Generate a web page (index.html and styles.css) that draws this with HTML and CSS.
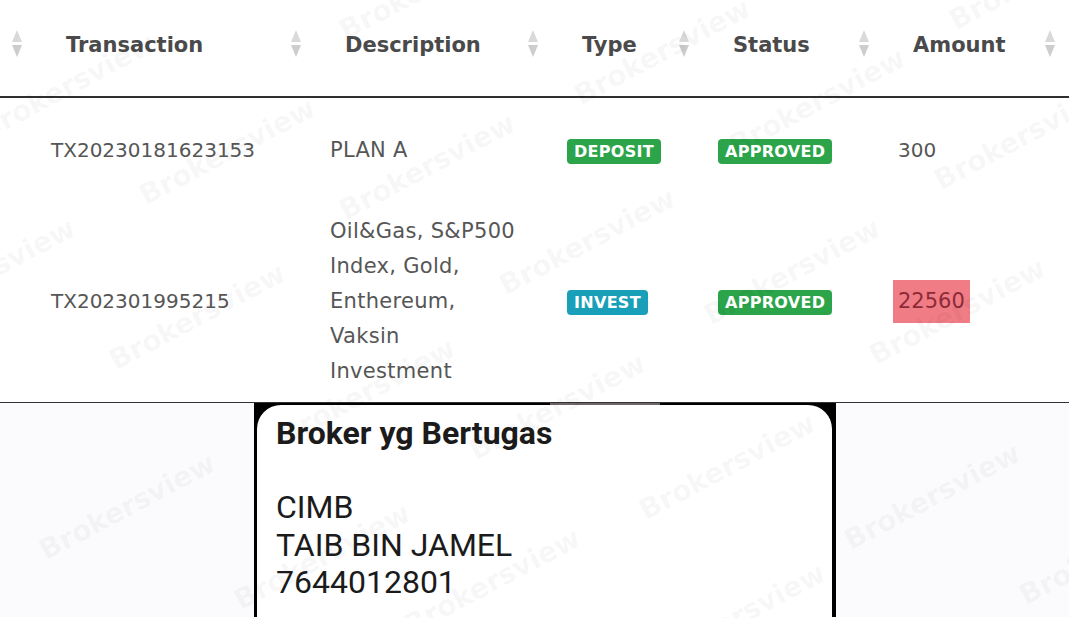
FILE: index.html
```html
<!DOCTYPE html>
<html>
<head>
<meta charset="utf-8">
<link rel="stylesheet" href="styles.css">
</head>
<body>
<div class="page">
  <table class="tx">
    <colgroup>
      <col class="c0"><col class="c1"><col class="c2"><col class="c3"><col class="c4"><col class="c5">
    </colgroup>
    <thead>
      <tr>
        <th><span class="sort"></span></th>
        <th>Transaction<span class="sort"></span></th>
        <th>Description<span class="sort"></span></th>
        <th>Type<span class="sort"></span></th>
        <th>Status<span class="sort"></span></th>
        <th>Amount<span class="sort"></span></th>
      </tr>
    </thead>
    <tbody>
      <tr class="r1">
        <td></td>
        <td>TX20230181623153</td>
        <td class="desc">PLAN A</td>
        <td><span class="badge green">DEPOSIT</span></td>
        <td><span class="badge green">APPROVED</span></td>
        <td>300</td>
      </tr>
      <tr class="r2">
        <td></td>
        <td>TX202301995215</td>
        <td class="desc">Oil&amp;Gas, S&amp;P500 Index, Gold, Enthereum, Vaksin Investment</td>
        <td><span class="badge teal">INVEST</span></td>
        <td><span class="badge green">APPROVED</span></td>
        <td><span class="hl">22560</span></td>
      </tr>
    </tbody>
  </table>

  <div class="shot">
    <div class="side left"></div>
    <div class="phone">
      <div class="phone-top"><span class="grey"></span></div>
      <div class="card">
        <div class="title">Broker yg Bertugas</div>
        <div class="lines">
          <div>&nbsp;</div>
          <div>CIMB</div>
          <div>TAIB BIN JAMEL</div>
          <div>7644012801</div>
        </div>
      </div>
    </div>
    <div class="side"></div>
  </div>

  <div class="wm" style="left:-30px;top:70px">Brokersview</div>
  <div class="wm" style="left:130px;top:135px">Brokersview</div>
  <div class="wm" style="left:330px;top:150px">Brokersview</div>
  <div class="wm" style="left:565px;top:35px">Brokersview</div>
  <div class="wm" style="left:720px;top:85px">Brokersview</div>
  <div class="wm" style="left:925px;top:120px">Brokersview</div>
  <div class="wm" style="left:330px;top:-30px">Brokersview</div>
  <div class="wm" style="left:940px;top:-40px">Brokersview</div>
  <div class="wm" style="left:490px;top:225px">Brokersview</div>
  <div class="wm" style="left:695px;top:255px">Brokersview</div>
  <div class="wm" style="left:100px;top:300px">Brokersview</div>
  <div class="wm" style="left:860px;top:295px">Brokersview</div>
  <div class="wm" style="left:-110px;top:255px">Brokersview</div>
  <div class="wm" style="left:270px;top:375px">Brokersview</div>
  <div class="wm" style="left:460px;top:390px">Brokersview</div>
  <div class="wm" style="left:30px;top:490px">Brokersview</div>
  <div class="wm" style="left:225px;top:540px">Brokersview</div>
  <div class="wm" style="left:395px;top:565px">Brokersview</div>
  <div class="wm" style="left:630px;top:450px">Brokersview</div>
  <div class="wm" style="left:835px;top:480px">Brokersview</div>
  <div class="wm" style="left:640px;top:600px">Brokersview</div>
  <div class="wm" style="left:1010px;top:535px">Brokersview</div>
</div>
</body>
</html>
```

FILE: styles.css
```css
* { box-sizing: border-box; }
html, body { margin: 0; padding: 0; background: #ffffff; }
body { width: 1069px; height: 618px; overflow: hidden; }

.page {
  position: relative;
  width: 1069px;
  height: 618px;
  overflow: hidden;
  font-family: "DejaVu Sans", "Open Sans", sans-serif;
}

.tx {
  width: 1069px;
  border-collapse: collapse;
  table-layout: fixed;
}
.c0 { width: 36px; }
.c1 { width: 279px; }
.c2 { width: 237px; }
.c3 { width: 151px; }
.c4 { width: 180px; }
.c5 { width: 186px; }

.tx th {
  position: relative;
  height: 97px;
  padding: 0 0 6px 30px;
  text-align: left;
  font-size: 21px;
  font-weight: bold;
  color: #4a4a4a;
  border-bottom: 2px solid #2f2f2f;
  white-space: nowrap;
}

.sort {
  position: absolute;
  right: 14px;
  top: 30px;
  width: 10px;
  height: 27px;
}
.sort::before, .sort::after {
  content: "";
  position: absolute;
  left: 0;
  border-left: 5px solid transparent;
  border-right: 5px solid transparent;
}
.sort::before {
  top: 0;
  border-bottom: 12px solid #d9d9d9;
}
.sort::after {
  bottom: 0;
  border-top: 12px solid #cdcdcd;
}

.tx td {
  padding: 15px 15px 11px;
  font-size: 20px;
  color: #565656;
  vertical-align: middle;
  line-height: 35px;
}
.r1 td { height: 101px; }
.r2 td { height: 204px; border-bottom: 1px solid #333; }
.tx td.desc {
  padding-right: 25px;
  font-size: 21px;
  letter-spacing: 0.3px;
}

.badge {
  display: inline-block;
  padding: 0 7px;
  height: 25px;
  line-height: 25px;
  border-radius: 4px;
  color: #ffffff;
  font-size: 16px;
  font-weight: bold;
  letter-spacing: 0.3px;
  vertical-align: middle;
}
.green { background: #2ba44a; }
.teal { background: #1a9fb8; }

.hl {
  display: inline-block;
  margin-left: -5px;
  padding: 4px 5px;
  background: #f07c85;
  color: #8c2b38;
  line-height: 35px;
  font-size: 21px;
}

.shot {
  display: flex;
  height: 214px;
}
.side { flex: 1; background: #fbfbfd; }
.side.left { flex: 0 0 254px; }
.phone {
  width: 582px;
  background: #000;
  padding: 0 4px 0 3px;
  display: flex;
  flex-direction: column;
}
.phone-top {
  height: 2px;
  display: flex;
  justify-content: center;
}
.grey {
  width: 110px;
  margin-left: 120px;
  background: #6e6566;
}
.card {
  flex: 1;
  background: #ffffff;
  border-radius: 24px 24px 0 0;
  padding: 9px 19px 0;
  font-family: Roboto, "Liberation Sans", sans-serif;
  color: #1b1b1b;
}
.title {
  font-size: 32px;
  font-weight: bold;
  line-height: 38px;
}
.lines {
  font-size: 32px;
  line-height: 37.5px;
}

.wm {
  position: absolute;
  font-family: "DejaVu Sans", sans-serif;
  font-weight: bold;
  font-size: 28px;
  color: rgba(0, 0, 0, 0.045);
  transform: rotate(-28deg);
  white-space: nowrap;
  pointer-events: none;
}
```
